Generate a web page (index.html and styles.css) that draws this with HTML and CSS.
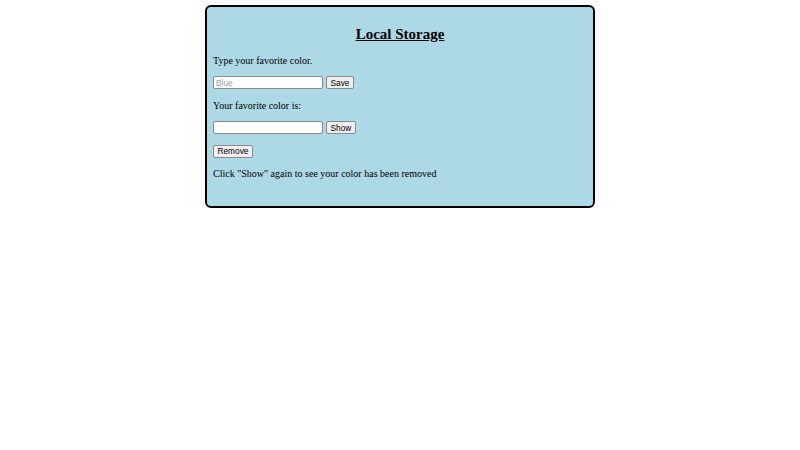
FILE: index.html
```html
<!DOCTYPE html>
<html lang="en">
<head>
<meta charset="utf-8">
<title>Local Storage</title>
<link rel="stylesheet" href="styles.css">
</head>
<body>
  <main class="storage-card">
    <h2 class="storage-title">Local Storage</h2>
    <p class="storage-text">Type your favorite color.</p>
    <div class="control-row">
      <input class="text-field" type="text" placeholder="Blue">
      <button class="plain-button" type="button">Save</button>
    </div>
    <p class="storage-text">Your favorite color is:</p>
    <div class="control-row">
      <input class="text-field" type="text">
      <button class="plain-button" type="button">Show</button>
    </div>
    <div class="control-row">
      <button class="plain-button" type="button">Remove</button>
    </div>
    <p class="storage-text">Click "Show" again to see your color has been removed</p>
  </main>
</body>
</html>
```

FILE: styles.css
```css
html, body {
  background: #ffffff;
}

body {
  margin: 5px;
  font-family: "Liberation Serif", "Times New Roman", serif;
  font-size: 10px;
  color: #000000;
}

.storage-card {
  width: 374px;
  margin: 0 auto;
  padding: 6px 6px 17px;
  background: #add8e6;
  border: 2px solid #000000;
  border-radius: 6px;
  display: flow-root;
}

.storage-title {
  margin: 12.5px 0 12px;
  font-size: 15px;
  font-weight: bold;
  text-align: center;
  text-decoration: underline;
  line-height: 17px;
}

.storage-text {
  margin: 10px 0;
  line-height: 11.5px;
}

.control-row {
  display: flex;
  align-items: center;
  gap: 3px;
  margin: 10.3px 0;
}

.text-field {
  box-sizing: border-box;
  width: 110px;
  height: 13px;
  margin: 0;
  padding: 0 2px;
  font-family: "Liberation Sans", Arial, sans-serif;
  font-size: 8.3px;
  color: #000000;
  background: #ffffff;
  border: 1px solid #8a8a8a;
  border-radius: 2px;
}

.text-field::placeholder {
  color: #9a9a9a;
}

.plain-button {
  box-sizing: border-box;
  height: 13px;
  margin: 0;
  padding: 0 3.5px;
  font-family: "Liberation Sans", Arial, sans-serif;
  font-size: 8.3px;
  line-height: 1;
  color: #000000;
  background: #efefef;
  border: 1px solid #8a8a8a;
  border-radius: 2px;
}
```
